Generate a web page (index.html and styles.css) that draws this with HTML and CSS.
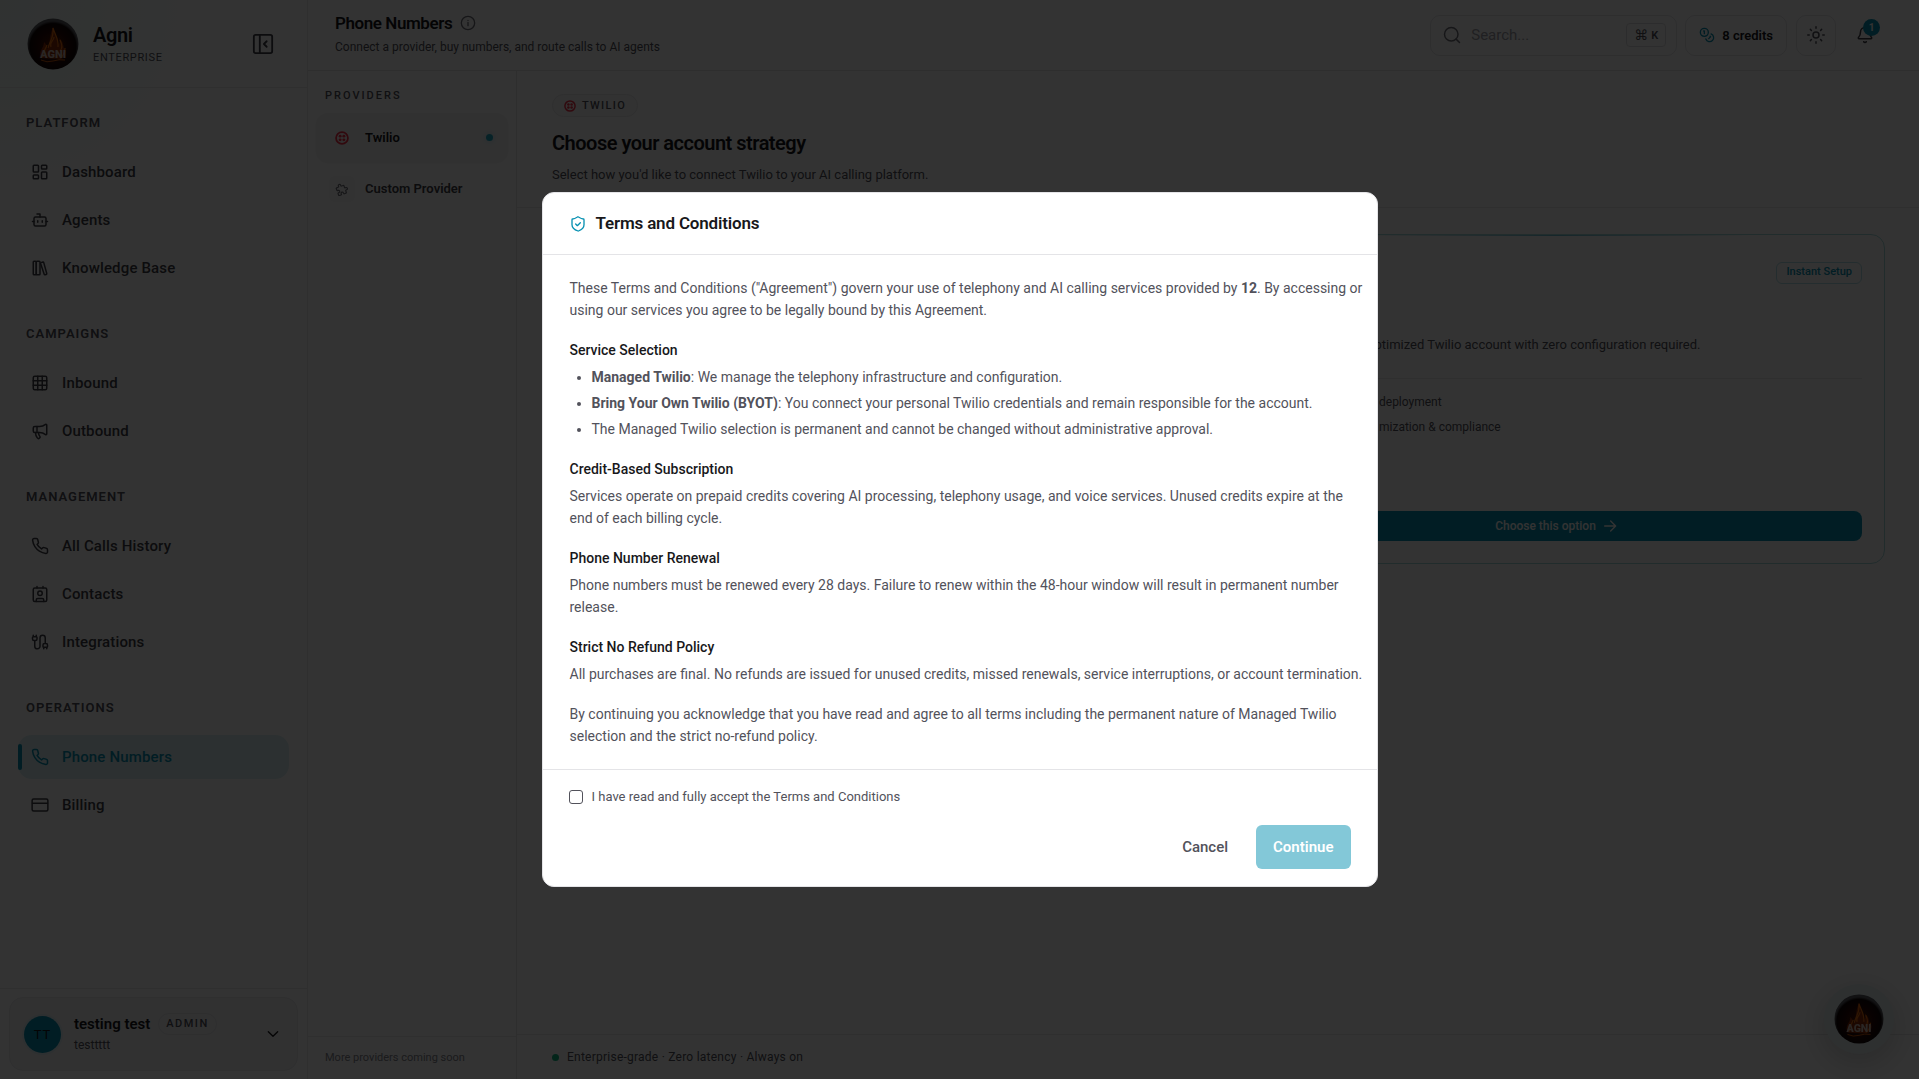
FILE: index.html
```html
<!DOCTYPE html>
<html lang="en">
<head>
<meta charset="utf-8">
<title>Phone Numbers</title>
<link rel="stylesheet" href="styles.css">
</head>
<body>
<svg class="defs" width="0" height="0" aria-hidden="true">
  <defs>
    <radialGradient id="orb" cx="50%" cy="55%" r="50%">
      <stop offset="0" stop-color="#5a1404"/>
      <stop offset=".6" stop-color="#260805"/>
      <stop offset=".9" stop-color="#120606"/>
      <stop offset="1" stop-color="#5a5a60"/>
    </radialGradient>
    <symbol id="phone" viewBox="0 0 24 24"><path d="M22 16.92v3a2 2 0 0 1-2.18 2 19.79 19.79 0 0 1-8.63-3.07 19.5 19.5 0 0 1-6-6 19.79 19.79 0 0 1-3.07-8.67A2 2 0 0 1 4.11 2h3a2 2 0 0 1 2 1.72 12.84 12.84 0 0 0 .7 2.81 2 2 0 0 1-.45 2.11L8.09 9.91a16 16 0 0 0 6 6l1.27-1.27a2 2 0 0 1 2.11-.45 12.84 12.84 0 0 0 2.81.7A2 2 0 0 1 22 16.92z"/></symbol>
    <symbol id="twilio" viewBox="0 0 24 24"><circle cx="12" cy="12" r="10.2" fill="none" stroke-width="3"/><g fill="currentColor" stroke="none"><circle cx="8.8" cy="8.8" r="2.5"/><circle cx="15.2" cy="8.8" r="2.5"/><circle cx="8.8" cy="15.2" r="2.5"/><circle cx="15.2" cy="15.2" r="2.5"/></g></symbol>
    <symbol id="logo" viewBox="0 0 52 52">
      <circle cx="26" cy="26" r="25.500" fill="url(#orb)"/>
      <path d="M14 40c-3-8 3-9 3-16 3 3 3 5 3 7 4-5 1-9 6-22 1 8 6 10 5 18 2-2 2-4 1-7 6 5 3 10 7 13 0 5-2 7-5 8z" fill="#8a2a08"/>
      <path d="M16 39c-1-5 3-8 4-12M21 30c2-8 6-10 5-20 2 7 6 11 5 19M33 33c3-3 2-7 0-11M38 30c0 5-2 8-5 10M24 29c-2-5 3-6 3-10" fill="none" stroke="#e8700f" stroke-width="1.2"/>
      <text x="26" y="40" text-anchor="middle" font-family="Roboto, sans-serif" font-weight="900" font-size="11" fill="#d0bcb4">AGNI</text>
      <path d="M14 42q6 3 12 1t12-1" fill="none" stroke="#c8580c" stroke-width="1"/>
    </symbol>
  </defs>
</svg>

<div class="app">
  <aside class="sidebar">
    <header class="brand">
      <svg class="brand-logo"><use href="#logo"/></svg>
      <div class="brand-text">
        <div class="brand-name">Agni</div>
        <div class="brand-plan">ENTERPRISE</div>
      </div>
      <button class="plain collapse" aria-label="Collapse sidebar"><svg class="icon i22" viewBox="0 0 24 24"><rect x="2" y="2" width="20" height="20" rx="2"/><path d="M8.500 2v20M16 9l-3 3 3 3"/></svg></button>
    </header>
    <nav class="nav">
      <section class="group">
        <h2>PLATFORM</h2>
        <a href="#"><svg class="icon i18" viewBox="0 0 24 24"><rect x="3" y="3" width="7" height="9" rx="1"/><rect x="14" y="3" width="7" height="5" rx="1"/><rect x="14" y="12" width="7" height="9" rx="1"/><rect x="3" y="16" width="7" height="5" rx="1"/></svg>Dashboard</a>
        <a href="#"><svg class="icon i18" viewBox="0 0 24 24"><path d="M12 8V4H8M2 14h2M20 14h2M15 13v2M9 13v2"/><rect x="4" y="8" width="16" height="12" rx="2"/></svg>Agents</a>
        <a href="#"><svg class="icon i18" viewBox="0 0 24 24"><rect x="3" y="3" width="4" height="18" rx="1"/><rect x="7" y="3" width="5" height="18" rx="1"/><path d="m13.500 4.800 2.300-.7a1 1 0 0 1 1.200.7l4 14.600a1 1 0 0 1-.7 1.200l-1.500.4a1 1 0 0 1-1.200-.7L12.800 6a1 1 0 0 1 .7-1.200z"/></svg>Knowledge Base</a>
      </section>
      <section class="group">
        <h2>CAMPAIGNS</h2>
        <a href="#"><svg class="icon i18" viewBox="0 0 24 24"><rect x="3" y="3" width="18" height="18" rx="2"/><path d="M3 9h18M3 15h18M9 3v18M15 3v18"/></svg>Inbound</a>
        <a href="#"><svg class="icon i18" viewBox="0 0 24 24"><path d="M11 6a13 13 0 0 0 8.400-2.800A1 1 0 0 1 21 4v12a1 1 0 0 1-1.600.8A13 13 0 0 0 11 14H5a2 2 0 0 1-2-2V8a2 2 0 0 1 2-2z"/><path d="M6 14a12 12 0 0 0 2.400 7.200 2 2 0 0 0 3.200-2.400A8 8 0 0 1 10 14M8 6v8"/></svg>Outbound</a>
      </section>
      <section class="group">
        <h2>MANAGEMENT</h2>
        <a href="#"><svg class="icon i18"><use href="#phone"/></svg>All Calls History</a>
        <a href="#"><svg class="icon i18" viewBox="0 0 24 24"><path d="M16 2v2M8 2v2M7 22v-2a2 2 0 0 1 2-2h6a2 2 0 0 1 2 2v2"/><circle cx="12" cy="11" r="3"/><rect x="3" y="4" width="18" height="18" rx="2"/></svg>Contacts</a>
        <a href="#"><svg class="icon i18" viewBox="0 0 24 24"><path d="M17 19a1 1 0 0 1-1-1v-2a2 2 0 0 1 2-2h2a2 2 0 0 1 2 2v2a1 1 0 0 1-1 1zM17 21v-2M19 14V6.500a3.500 3.500 0 0 0-7 0v11a3.500 3.500 0 0 1-7 0V10M21 21v-2M3 5V3M4 10a2 2 0 0 1-2-2V6a1 1 0 0 1 1-1h4a1 1 0 0 1 1 1v2a2 2 0 0 1-2 2zM7 5V3"/></svg>Integrations</a>
      </section>
      <section class="group">
        <h2>OPERATIONS</h2>
        <a href="#" class="active" aria-current="page"><svg class="icon i18"><use href="#phone"/></svg>Phone Numbers</a>
        <a href="#"><svg class="icon i18" viewBox="0 0 24 24"><rect x="1.500" y="4" width="21" height="16" rx="2"/><path d="M2 9.500h20"/></svg>Billing</a>
      </section>
    </nav>
    <footer class="account">
      <button class="account-card">
        <span class="avatar">TT</span>
        <span class="who">
          <span class="who-row"><span class="who-name">testing test</span><span class="role">ADMIN</span></span>
          <span class="who-org">testtttt</span>
        </span>
        <svg class="icon i16" viewBox="0 0 24 24"><path d="m5 8.500 7 7 7-7"/></svg>
      </button>
    </footer>
  </aside>

  <div class="page">
    <header class="topbar">
      <div class="heading">
        <h1>Phone Numbers <svg class="icon i16 info" viewBox="0 0 24 24"><circle cx="12" cy="12" r="10"/><path d="M12 16v-5M12 8v.1"/></svg></h1>
        <p>Connect a provider, buy numbers, and route calls to AI agents</p>
      </div>
      <div class="tools">
        <label class="search">
          <svg class="icon i18" viewBox="0 0 24 24"><circle cx="11" cy="11" r="9"/><path d="m22 22-4.500-4.500"/></svg>
          <input type="text" placeholder="Search..." aria-label="Search">
          <kbd><span class="cmd">⌘</span>K</kbd>
        </label>
        <button class="tool credits"><svg class="icon i16" viewBox="0 0 24 24"><circle cx="8" cy="8" r="6"/><path d="M18.100 10.400A6 6 0 1 1 10.300 18M7 6h1v4M16.700 13.900l.7.700-2.800 2.800"/></svg>8 credits</button>
        <button class="tool theme" aria-label="Theme"><svg class="icon i18" viewBox="0 0 24 24"><circle cx="12" cy="12" r="4"/><path d="M12 1v2M12 21v2M4.500 4.500l1.400 1.400M18.100 18.100l1.400 1.400M1 12h2M21 12h2M5.900 18.100l-1.400 1.400M19.500 4.500l-1.400 1.400"/></svg></button>
        <button class="plain bell" aria-label="Notifications"><svg class="icon i18" viewBox="0 0 24 24"><path d="M10.300 21a2 2 0 0 0 3.400 0M3.300 15.300A1 1 0 0 0 4 17h16a1 1 0 0 0 .7-1.700C19.400 14 18 12.500 18 8A6 6 0 0 0 6 8c0 4.500-1.400 6-2.700 7.300"/></svg><span class="count">1</span></button>
      </div>
    </header>

    <div class="body">
      <aside class="providers">
        <h2>PROVIDERS</h2>
        <button class="provider selected"><span class="tile"><svg class="icon i14 red"><use href="#twilio"/></svg></span>Twilio<span class="dot"></span></button>
        <button class="provider"><span class="tile gray"><svg class="icon i14" viewBox="0 0 24 24"><path transform="rotate(-20 12 12)" d="M4 7h3a1 1 0 0 0 1-1v-1a2 2 0 0 1 4 0v1a1 1 0 0 0 1 1h3a1 1 0 0 1 1 1v3a1 1 0 0 0 1 1h1a2 2 0 0 1 0 4h-1a1 1 0 0 0-1 1v3a1 1 0 0 1-1 1h-3a1 1 0 0 1-1-1v-1a2 2 0 0 0-4 0v1a1 1 0 0 1-1 1h-3a1 1 0 0 1-1-1v-3a1 1 0 0 1 1-1h1a2 2 0 0 0 0-4h-1a1 1 0 0 1-1-1v-3a1 1 0 0 1 1-1"/></svg></span>Custom Provider</button>
        <p class="more">More providers coming soon</p>
      </aside>

      <main class="main">
        <header class="intro">
          <span class="pill"><svg class="icon i12 red"><use href="#twilio"/></svg>TWILIO</span>
          <h2>Choose your account strategy</h2>
          <p>Select how you'd like to connect Twilio to your AI calling platform.</p>
        </header>
        <section class="options">
          <div class="spare"></div>
          <article class="option">
            <span class="tag">Instant Setup</span>
            <p class="lead">optimized Twilio account with zero configuration required.</p>
            <ul>
              <li>deployment</li>
              <li>mization &amp; compliance</li>
            </ul>
            <button class="choose">Choose this option <svg class="icon i16" viewBox="0 0 24 24"><path d="M4 12h16M13 4.500l7.500 7.500-7.500 7.500"/></svg></button>
          </article>
        </section>
        <footer class="status"><span class="live"></span>Enterprise-grade · Zero latency · Always on</footer>
      </main>
    </div>
  </div>
</div>

<button class="chat" aria-label="Open assistant"><svg class="chat-logo"><use href="#logo"/></svg></button>

<div class="overlay">
  <form class="dialog" role="dialog" aria-labelledby="terms-title">
    <header class="dialog-head">
      <svg class="icon i16 shield" viewBox="0 0 24 24"><path d="M21 13c0 5-3.500 7.500-8.300 9.500a1 1 0 0 1-.7 0C6.500 20.500 3 18 3 13V5.500a1 1 0 0 1 1-1c2 0 4.500-1.200 7.200-3a1.200 1.200 0 0 1 1.500 0C15.500 3.300 18 4.500 20 4.500a1 1 0 0 1 1 1z"/><path d="m8.500 12 2.500 2.500 4.500-4.500"/></svg>
      <h2 id="terms-title">Terms and Conditions</h2>
    </header>
    <div class="terms">
      <p>These Terms and Conditions ("Agreement") govern your use of telephony and AI calling services provided by <strong>12</strong>. By accessing or using our services you agree to be legally bound by this Agreement.</p>
      <section>
        <h3>Service Selection</h3>
        <ul>
          <li><strong>Managed Twilio</strong>: We manage the telephony infrastructure and configuration.</li>
          <li><strong>Bring Your Own Twilio (BYOT)</strong>: You connect your personal Twilio credentials and remain responsible for the account.</li>
          <li>The Managed Twilio selection is permanent and cannot be changed without administrative approval.</li>
        </ul>
      </section>
      <section>
        <h3>Credit-Based Subscription</h3>
        <p>Services operate on prepaid credits covering AI processing, telephony usage, and voice services. Unused credits expire at the end of each billing cycle.</p>
      </section>
      <section>
        <h3>Phone Number Renewal</h3>
        <p>Phone numbers must be renewed every 28 days. Failure to renew within the 48-hour window will result in permanent number release.</p>
      </section>
      <section>
        <h3>Strict No Refund Policy</h3>
        <p>All purchases are final. No refunds are issued for unused credits, missed renewals, service interruptions, or account termination.</p>
      </section>
      <p>By continuing you acknowledge that you have read and agree to all terms including the permanent nature of Managed Twilio selection and the strict no-refund policy.</p>
    </div>
    <footer class="dialog-foot">
      <label class="accept"><input type="checkbox">I have read and fully accept the Terms and Conditions</label>
      <div class="actions">
        <button type="button" class="cancel">Cancel</button>
        <button type="button" class="continue" disabled>Continue</button>
      </div>
    </footer>
  </form>
</div>
</body>
</html>
```
FILE: styles.css
```css
* { box-sizing: border-box; }
body, h1, h2, h3, p, ul { margin: 0; padding: 0; }
body {
  font-family: Roboto, "Liberation Sans", sans-serif;
  font-size: 14px;
  color: #18181b;
  background: #fff;
}
button, input { font: inherit; color: inherit; }
button { border: 0; padding: 0; background: none; text-align: left; }
a { color: inherit; text-decoration: none; }
.defs { position: absolute; }

.icon {
  fill: none;
  stroke: currentColor;
  stroke-width: 2;
  stroke-linecap: round;
  stroke-linejoin: round;
  flex: none;
}
.i12 { width: 12px; height: 12px; }
.i14 { width: 14px; height: 14px; }
.i16 { width: 16px; height: 16px; }
.i18 { width: 18px; height: 18px; }
.i22 { width: 22px; height: 22px; }
.red { color: #f22f46; }

.app { display: flex; min-height: 100vh; }

/* Sidebar */
.sidebar {
  width: 308px;
  flex: none;
  display: flex;
  flex-direction: column;
  border-right: 1px solid #e8e8ea;
  background: radial-gradient(circle at 0 0, #effaf6, #fff 220px);
}
.brand {
  height: 88px;
  display: flex;
  align-items: center;
  padding: 0 31px 0 27px;
  border-bottom: 1px solid #e8e8ea;
}
.brand-logo { width: 52px; height: 52px; }
.brand-text { flex: 1; padding: 2px 0 0 14px; }
.brand-name { font-size: 20px; line-height: 26px; font-weight: 600; letter-spacing: -0.02em; }
.brand-plan { font-size: 11px; line-height: 20px; letter-spacing: 0.06em; color: #52525b; }
.collapse { padding: 2px; color: #3f3f46; line-height: 0; }

.nav { flex: 1; padding: 19px 18px; display: flex; flex-direction: column; gap: 28px; }
.group { display: flex; flex-direction: column; gap: 4px; }
.group h2 {
  padding: 0 8px;
  margin-bottom: 7px;
  font-size: 13px;
  line-height: 32px;
  font-weight: 600;
  letter-spacing: 1px;
  color: #52525b;
}
.group a {
  position: relative;
  height: 44px;
  display: flex;
  align-items: center;
  gap: 13px;
  padding: 0 13px;
  border-radius: 14px;
  font-size: 15px;
  font-weight: 500;
  letter-spacing: 0.01em;
  color: #3f3f46;
}
.group .active { color: #0891b2; background: #daf0f4; }
.active::before {
  content: "";
  position: absolute;
  left: 0;
  top: 9px;
  bottom: 9px;
  width: 4px;
  border-radius: 4px;
  background: #0891b2;
}

.account { padding: 8px 9px; border-top: 1px solid #e8e8ea; }
.account-card {
  width: 100%;
  height: 74px;
  display: flex;
  align-items: center;
  padding: 0 16px 0 14px;
  border: 1px solid #e8e8ea;
  border-radius: 14px;
  background: #f4f4f5;
}
.avatar {
  width: 37px;
  height: 37px;
  border-radius: 50%;
  background: #0891b2;
  box-shadow: 0 0 0 2px #e0eff3;
  font-size: 13px;
  line-height: 37px;
  letter-spacing: 1px;
  text-align: center;
}
.who { flex: 1; padding-left: 13px; }
.who-row { display: flex; align-items: center; gap: 8px; }
.who-name { font-size: 15px; line-height: 22px; font-weight: 600; }
.role {
  padding: 0 7px;
  border: 1px solid #e4e4e7;
  border-radius: 12px;
  font-size: 11px;
  line-height: 20px;
  font-weight: 500;
  letter-spacing: 1.5px;
  color: #52525b;
}
.who-org { display: block; font-size: 12px; line-height: 20px; color: #52525b; }

/* Top bar */
.page { flex: 1; min-width: 0; display: flex; flex-direction: column; }
.topbar {
  height: 71px;
  display: flex;
  justify-content: space-between;
  align-items: center;
  padding: 0 45px 0 27px;
  border-bottom: 1px solid #e4e4e7;
}
.heading h1 {
  display: flex;
  align-items: center;
  gap: 8px;
  font-size: 17px;
  line-height: 24px;
  font-weight: 600;
  letter-spacing: -0.025em;
}
.info { color: #71717a; }
.heading p { font-size: 12px; line-height: 24px; color: #52525b; }
.tools { display: flex; align-items: center; }
.search {
  width: 247px;
  height: 41px;
  display: flex;
  align-items: center;
  gap: 10px;
  padding: 0 10px 0 12px;
  margin-right: 8px;
  border: 1px solid #e4e4e7;
  border-radius: 10px;
  color: #71717a;
}
.search input { flex: 1; min-width: 0; border: 0; padding: 0; background: none; font-size: 15px; }
.search input::placeholder { color: #a1a1aa; opacity: 1; }
kbd {
  display: flex;
  align-items: center;
  gap: 3px;
  height: 24px;
  padding: 0 7px;
  border: 1px solid #dcdce0;
  border-radius: 4px;
  font: 600 11px Roboto, sans-serif;
  color: #52525b;
}
.cmd { font: 14px "DejaVu Sans", sans-serif; }
.tool {
  height: 41px;
  display: flex;
  align-items: center;
  border: 1px solid #e4e4e7;
  border-radius: 10px;
}
.credits { gap: 7px; padding: 0 13px; margin-right: 9px; font-size: 13px; font-weight: 600; }
.credits .icon { color: #0891b2; }
.theme { padding: 0 10px; margin-right: 20px; color: #52525b; }
.bell { position: relative; line-height: 0; color: #3f3f46; }
.count {
  position: absolute;
  right: -6px;
  top: -7px;
  width: 17px;
  height: 17px;
  border-radius: 50%;
  background: #0891b2;
  color: #fff;
  font-size: 10px;
  line-height: 17px;
  font-weight: 700;
  text-align: center;
}

/* Providers column */
.body { flex: 1; display: flex; }
.providers {
  width: 209px;
  flex: none;
  display: flex;
  flex-direction: column;
  border-right: 1px solid #e4e4e7;
}
.providers h2 {
  padding: 15px 17px 7px;
  font-size: 11px;
  line-height: 20px;
  font-weight: 500;
  letter-spacing: 2px;
  color: #52525b;
}
.provider {
  height: 49px;
  display: flex;
  align-items: center;
  gap: 10px;
  margin: 0 8px 2px;
  padding: 0 15px 0 13px;
  border-radius: 12px;
  font-size: 13px;
  font-weight: 600;
  color: #3f3f46;
}
.provider.selected { background: #f4f4f5; box-shadow: 0 1px 2px #0001; color: #18181b; }
.tile { width: 26px; height: 26px; display: grid; place-items: center; border-radius: 6px; }
.tile.gray { background: #fafafa; color: #71717a; }
.dot { width: 7px; height: 7px; margin-left: auto; border-radius: 50%; background: #22a8c4; box-shadow: 0 0 6px #22b8cf55; }
.more {
  margin-top: auto;
  padding: 10px 17px;
  border-top: 1px solid #e8e8ea;
  font-size: 11px;
  line-height: 22px;
  color: #85858d;
}

/* Main area */
.main { flex: 1; min-width: 0; display: flex; flex-direction: column; }
.intro {
  height: 137px;
  padding: 23px 35px 0;
  border-bottom: 1px solid #e8e8ea;
}
.pill {
  display: inline-flex;
  align-items: center;
  gap: 6px;
  height: 23px;
  padding: 0 11px;
  border: 1px solid #e8e8ea;
  border-radius: 12px;
  background: #fafafa;
  font-size: 11px;
  font-weight: 500;
  letter-spacing: 0.12em;
  color: #52525b;
}
.intro h2 { margin-top: 10px; font-size: 20px; line-height: 32px; font-weight: 600; letter-spacing: -0.025em; }
.intro p { margin-top: 4px; font-size: 13px; line-height: 24px; color: #52525b; }
.options {
  flex: 1;
  display: grid;
  grid-template-columns: 1fr 1fr;
  align-items: start;
  gap: 20px;
  padding: 26px 34px;
}
.option {
  height: 330px;
  display: flex;
  flex-direction: column;
  padding: 27px 22px 22px;
  border: 1px solid #a5dadd;
  border-radius: 14px;
  background: linear-gradient(90deg, transparent 20%, #0891b299 50%, transparent 80%) top / 100% 1px no-repeat;
}
.tag {
  align-self: flex-end;
  height: 22px;
  padding: 0 9px;
  border: 1px solid #b4e0e8;
  border-radius: 6px;
  font-size: 11px;
  line-height: 18px;
  font-weight: 500;
  color: #0891b2;
}
.lead { margin-top: 50px; padding: 0 0 22px 116px; border-bottom: 1px solid #e8e8ea; font-size: 13px; line-height: 22px; color: #52525b; }
.option ul { margin-top: 11px; padding-left: 128px; list-style: none; font-size: 12px; line-height: 25px; color: #52525b; }
.choose {
  height: 30px;
  margin-top: auto;
  display: flex;
  justify-content: center;
  align-items: center;
  gap: 6px;
  border-radius: 8px;
  background: #0891b2;
  color: #fff;
  font-size: 12px;
  font-weight: 500;
}
.status {
  display: flex;
  align-items: center;
  gap: 8px;
  padding: 10px 35px;
  border-top: 1px solid #e8e8ea;
  font-size: 12px;
  line-height: 24px;
  letter-spacing: 0.02em;
  color: #52525b;
}
.live { width: 7px; height: 7px; border-radius: 50%; background: #10b981; }

.chat {
  position: fixed;
  right: 25px;
  bottom: 25px;
  width: 70px;
  height: 70px;
  display: grid;
  place-items: center;
  border-radius: 50%;
  background: #e4eff0;
  box-shadow: 0 8px 32px #0003;
}
.chat-logo { width: 50px; height: 50px; }

/* Dialog */
.overlay {
  position: fixed;
  inset: 0;
  display: grid;
  place-items: center;
  background: rgba(0, 0, 0, 0.8);
}
.dialog {
  width: 836px;
  max-width: 100%;
  border: 1px solid #e4e4e7;
  border-radius: 12px;
  background: #fff;
}
.dialog-head {
  display: flex;
  align-items: center;
  gap: 10px;
  padding: 18px 27px;
  border-bottom: 1px solid #e4e4e7;
}
.dialog-head h2 { font-size: 17px; line-height: 25px; font-weight: 600; letter-spacing: -0.01em; }
.shield { color: #0891b2; }
.terms {
  display: flex;
  flex-direction: column;
  gap: 18px;
  padding: 22px 10px 22px 27px;
  font-size: 14px;
  line-height: 22px;
  color: #52525b;
}
.terms section { display: flex; flex-direction: column; gap: 5px; }
.terms h3 { font-size: 14px; line-height: 22px; font-weight: 500; color: #18181b; }
.terms ul { display: flex; flex-direction: column; gap: 4px; padding-left: 22px; }
.dialog-foot { padding: 17px 26px; border-top: 1px solid #e4e4e7; }
.accept { display: flex; align-items: center; gap: 9px; font-size: 13px; line-height: 20px; color: #52525b; }
.accept input {
  appearance: none;
  width: 14px;
  height: 14px;
  margin: 0;
  border: 1px solid #52525b;
  border-radius: 3px;
}
.actions { display: flex; justify-content: flex-end; gap: 11px; margin-top: 18px; }
.actions button { height: 44px; padding: 0 17px; border-radius: 6px; font-size: 15px; font-weight: 500; }
.cancel { color: #52525b; }
.actions .continue { background: #83c8d8; color: #fff; font-weight: 600; }
```
